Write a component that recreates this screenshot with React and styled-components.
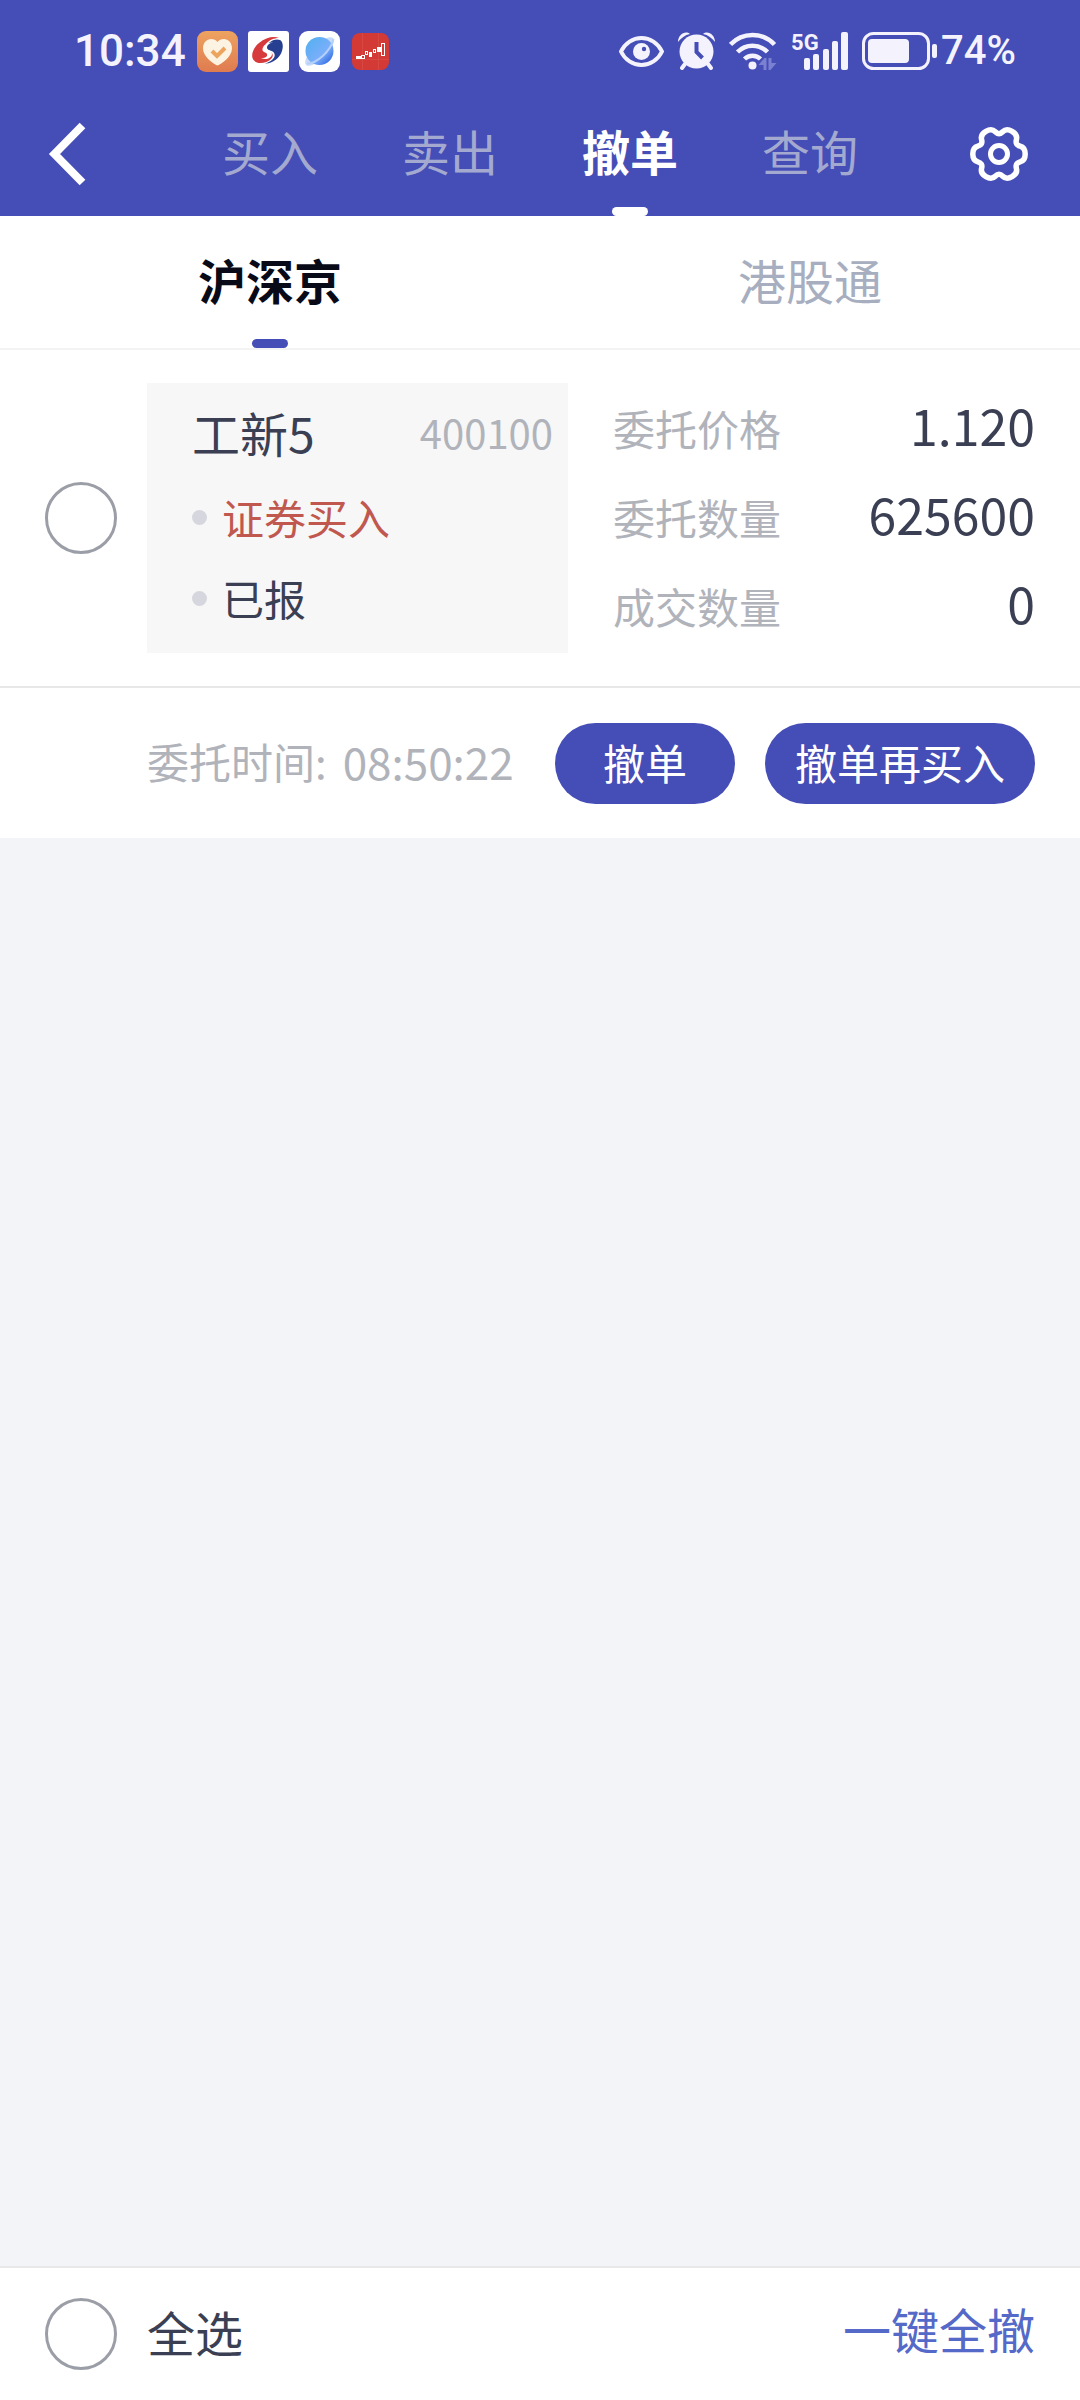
import React, { useState } from "react";
import styled, { createGlobalStyle, css } from "styled-components";

const color = {
  brand: "#454db6",
  status: "#f4f3fd",
  navMuted: "#a3a9cf",
  ink: "#3a3f53",
  inkStrong: "#080a18",
  muted: "#b1b3bb",
  tabMuted: "#a7aebf",
  buy: "#c0584f",
  link: "#5569c8",
  ring: "#9b9ea7",
  bullet: "#d6d7de",
  panel: "#f7f7f7",
  page: "#f3f4f7",
  line: "#e8e8e8",
};

const GlobalStyle = createGlobalStyle`
  *, *::before, *::after { box-sizing: border-box; }
  body {
    margin: 0;
    background: ${color.page};
    font-family: "Noto Sans CJK SC", sans-serif;
    color: ${color.ink};
  }
  button, input { font: inherit; color: inherit; margin: 0; }
  button { border: 0; padding: 0; background: none; cursor: pointer; }
`;

const Page = styled.div`
  display: flex;
  flex-direction: column;
  min-height: 100vh;
`;

const Header = styled.header`
  background: ${color.brand};
`;

const StatusBar = styled.div`
  display: flex;
  justify-content: space-between;
  align-items: center;
  height: 102px;
  padding: 0 64px 0 74px;
  color: ${color.status};
`;

const StatusGroup = styled.div`
  display: flex;
  align-items: center;
  gap: ${(p) => p.$gap}px;
`;

const StatusText = styled.span`
  font-family: Roboto, "Noto Sans CJK SC", sans-serif;
  font-size: ${(p) => p.$size}px;
  line-height: 48px;
  font-weight: 500;
`;

const Clock = styled(StatusText)`
  min-width: 113px;
`;

const BatteryGroup = styled.div`
  display: flex;
  align-items: center;
  gap: 4px;
`;

const Signal = styled.div`
  position: relative;
  display: flex;
`;

const NetworkTag = styled.span`
  position: absolute;
  top: 0;
  left: 0;
  font-family: Roboto, sans-serif;
  font-size: 22px;
  line-height: 22px;
  font-weight: 700;
`;

const Nav = styled.nav`
  display: grid;
  grid-template-columns: repeat(6, 1fr);
  height: 114px;
`;

const IconButton = styled.button`
  display: flex;
  align-items: center;
  justify-content: ${(p) => p.$side};
  padding: 0 52px 10px 48px;
`;

const tabBar = css`
  content: "";
  position: absolute;
  bottom: 0;
  left: 50%;
  width: 36px;
  height: 9px;
  margin-left: -18px;
  border-radius: 5px;
`;

const Tab = styled.button`
  position: relative;
  font-size: 48px;
  line-height: 60px;
  font-weight: ${(p) => (p.$active ? 700 : 400)};
`;

const NavTab = styled(Tab)`
  padding-bottom: 18px;
  color: ${(p) => (p.$active ? "#fff" : color.navMuted)};
  &::after {
    ${tabBar}
    background: ${(p) => (p.$active ? "#fff" : "transparent")};
  }
`;

const MarketTabs = styled.div`
  display: grid;
  grid-template-columns: 1fr 1fr;
  height: 134px;
  background: #fff;
  border-bottom: 2px solid #f3f3f4;
`;

const MarketTab = styled(Tab)`
  padding-bottom: 6px;
  color: ${(p) => (p.$active ? color.inkStrong : color.tabMuted)};
  &::after {
    ${tabBar}
    background: ${(p) => (p.$active ? color.brand : "transparent")};
  }
`;

const Orders = styled.main`
  flex: 1;
`;

const OrderCard = styled.article`
  background: #fff;
`;

const OrderBody = styled.div`
  display: grid;
  grid-template-columns: 102px minmax(0, 1fr) minmax(0, 1fr);
  align-items: center;
  padding: 33px 45px;
  border-bottom: 2px solid ${color.line};
`;

const Check = styled.input.attrs({ type: "checkbox" })`
  appearance: none;
  flex: none;
  width: 72px;
  height: 72px;
  border: 3px solid ${color.ring};
  border-radius: 50%;
  background: #fff;
  cursor: pointer;
  &:checked {
    border-color: ${color.brand};
    background: ${color.brand};
    box-shadow: inset 0 0 0 12px #fff;
  }
`;

const Stock = styled.section`
  align-self: stretch;
  display: flex;
  flex-direction: column;
  gap: 21px;
  margin-right: 23px;
  padding: 15px 15px 25px 45px;
  background: ${color.panel};
`;

const StockTitle = styled.div`
  display: flex;
  align-items: center;
  justify-content: space-between;
  line-height: 68px;
`;

const StockName = styled.h2`
  margin: 0;
  font-size: 48px;
  font-weight: 400;
`;

const StockCode = styled.span`
  font-size: 40px;
  color: ${color.muted};
`;

const StockTag = styled.div`
  display: flex;
  align-items: center;
  gap: 15px;
  font-size: 42px;
  line-height: 60px;
  color: ${(p) => (p.$buy ? color.buy : color.ink)};
  &::before {
    content: "";
    width: 15px;
    height: 15px;
    border-radius: 50%;
    background: ${color.bullet};
  }
`;

const Details = styled.dl`
  align-self: stretch;
  display: flex;
  flex-direction: column;
  gap: 29px;
  margin: 0;
  padding: 11px 0 0 22px;
`;

const Detail = styled.div`
  display: flex;
  align-items: baseline;
  justify-content: space-between;
`;

const DetailLabel = styled.dt`
  font-size: 42px;
  line-height: 48px;
  color: ${color.muted};
`;

const DetailValue = styled.dd`
  margin: 0;
  font-size: 50px;
  line-height: 60px;
`;

const OrderFooter = styled.footer`
  display: flex;
  align-items: center;
  justify-content: space-between;
  min-height: 150px;
  padding: 0 45px 0 147px;
`;

const OrderTime = styled.div`
  display: flex;
  align-items: center;
  gap: 16px;
  padding-bottom: 4px;
  font-size: 42px;
  line-height: 60px;
  color: ${color.muted};
`;

const TimeValue = styled.time`
  font-size: 44px;
`;

const Actions = styled.div`
  display: flex;
  gap: 30px;
`;

const Pill = styled.button`
  height: 81px;
  min-width: 180px;
  padding: 0 30px 3px;
  border-radius: 41px;
  background: ${color.brand};
  color: #fff;
  font-size: 42px;
  line-height: 60px;
`;

const BottomBar = styled.footer`
  display: flex;
  align-items: center;
  justify-content: space-between;
  height: 134px;
  padding: 0 45px;
  background: #fff;
  border-top: 2px solid ${color.line};
`;

const SelectAll = styled.label`
  display: flex;
  align-items: center;
  gap: 30px;
  font-size: 48px;
  line-height: 60px;
  cursor: pointer;
`;

const SelectAllText = styled.span`
  padding-bottom: 6px;
`;

const CancelAll = styled.button`
  padding-bottom: 12px;
  font-size: 48px;
  line-height: 60px;
  color: ${color.link};
`;

const HealthIcon = () => (
  <svg width="41" height="41" viewBox="0 0 41 41" aria-hidden="true">
    <defs>
      <linearGradient id="health" x1="0" y1="0" x2="0" y2="1">
        <stop offset="0" stopColor="#eea360" />
        <stop offset="1" stopColor="#df7b50" />
      </linearGradient>
    </defs>
    <rect width="41" height="41" rx="9" fill="url(#health)" />
    <path
      d="M20.500 34.500C17 33 6 26 6 17.500C6 11.500 10 8 14 8C17 8 19 9.300 20.500 11C22 9.300 24 8 27 8C31 8 35 11.500 35 17.500C35 26 24 33 20.500 34.500Z"
      fill="#fdf3e2"
    />
    <path d="M15 20l5 5 8-8" fill="none" stroke="#eda45f" strokeWidth="4" />
  </svg>
);

const BrokerIcon = () => (
  <svg width="41" height="41" viewBox="0 0 41 41" aria-hidden="true">
    <rect width="41" height="41" rx="3" fill="#fff" />
    <path
      d="M31 7C26 5 18 6 11 12C5 17 2 25 6 29.500C10 34 19 32 23 28C26 25 25 21 21 20.500C16 20 15 17 18 13C21 9 26 7 31 7Z"
      fill="#d63a3c"
    />
    <path
      d="M32 9C27 7 20 11 18 15.500C17 18 19 19 22 19.500C27 20.500 28 25 25 28C23 30 20 32 17 32.500C24 33 32 27 34 20C36 14 34 10 32 9Z"
      fill="#263f91"
    />
    <path
      d="M25 11.500C20 11 15 14 14.500 18C14 21.500 18 21 19 23C20 26 16 27.500 13 27C18 29.500 24 27 24 23C24 19 18.500 19.500 19 16C19.500 13.500 22 12 25 11.500Z"
      fill="#fff"
    />
  </svg>
);

const BrowserIcon = () => (
  <svg width="41" height="41" viewBox="0 0 41 41" aria-hidden="true">
    <defs>
      <linearGradient id="planet" x1="0" y1="0" x2="1" y2="1">
        <stop offset="0" stopColor="#4fb0f0" />
        <stop offset="0.600" stopColor="#7aaefa" />
        <stop offset="1" stopColor="#1f55dc" />
      </linearGradient>
    </defs>
    <rect width="41" height="41" rx="9" fill="#fff" />
    <ellipse cx="20.500" cy="20.500" rx="19" ry="7" fill="#c9dbfa" transform="rotate(-45 20.500 20.500)" />
    <circle cx="20.500" cy="20" r="14" fill="url(#planet)" />
    <path d="M8 32.500C17 33 32 20 34.500 8" fill="none" stroke="#b4d0fb" strokeWidth="2" />
  </svg>
);

const StocksIcon = () => (
  <svg width="41" height="41" viewBox="0 0 41 41" aria-hidden="true">
    <rect x="2" y="2" width="37" height="37" rx="8" fill="#d33a35" />
    <path d="M12.500 2v37M28.500 2v37M2 28.500h37" stroke="#d84842" strokeWidth="1" />
    <g fill="#fff">
      <rect x="6" y="25" width="5" height="3" />
      <rect x="19" y="21" width="3" height="5" />
      <rect x="27" y="16" width="4" height="5" />
    </g>
    <g fill="#d33a35" stroke="#fff" strokeWidth="1">
      <rect x="11.500" y="24.500" width="3" height="3" />
      <rect x="15.500" y="20.500" width="2" height="3" />
      <rect x="23.500" y="18.500" width="2" height="3" />
      <rect x="31.500" y="12.500" width="3" height="12" />
    </g>
  </svg>
);

const EyeIcon = () => (
  <svg width="45" height="31" viewBox="0 0 45 31" fill="none" aria-hidden="true">
    <path
      d="M2 15.500C6 7 14 2 22.500 2S39 7 43 15.500C39 24 31 29 22.500 29S6 24 2 15.500Z"
      stroke="currentColor"
      strokeWidth="4"
      strokeLinejoin="round"
    />
    <circle cx="22.500" cy="15.500" r="8.500" fill="currentColor" />
    <circle cx="25" cy="13" r="2.200" fill={color.brand} />
  </svg>
);

const AlarmIcon = () => (
  <svg width="37" height="38" viewBox="0 0 37 38" aria-hidden="true">
    <g fill="currentColor">
      <path d="M0 10C0 3 7-2 12 2C7 3 3 6 0 10Z" />
      <path d="M37 10C37 3 30-2 25 2C30 3 34 6 37 10Z" />
      <circle cx="18.500" cy="19.500" r="17" />
    </g>
    <path d="M7 32l-3 4M30 32l3 4" stroke="currentColor" strokeWidth="4" strokeLinecap="round" />
    <path d="M18.500 10v10l6 6" fill="none" stroke={color.brand} strokeWidth="4" />
  </svg>
);

const WifiIcon = () => (
  <svg width="48" height="38" viewBox="0 0 48 38" fill="none" aria-hidden="true">
    <g stroke="currentColor" strokeWidth="4.500">
      <path d="M1.500 12.500A30 30 0 0 1 45.500 12.500" />
      <path d="M8.500 20A21 21 0 0 1 38.500 20" />
      <path d="M15.500 27A11.500 11.500 0 0 1 31.500 27" />
    </g>
    <circle cx="23.500" cy="33.500" r="4" fill="currentColor" />
    <path d="M29.500 33l6-7h2v12h-3v-5zM39.500 26h3v5h5l-6 7h-2z" fill="#7b80d0" />
  </svg>
);

const BarsIcon = () => (
  <svg width="57" height="38" viewBox="0 0 57 38" fill="currentColor" aria-hidden="true">
    <rect x="13" y="26" width="6" height="12" rx="2" />
    <rect x="22" y="22" width="6" height="16" rx="2" />
    <rect x="32" y="17" width="6" height="21" rx="2" />
    <rect x="41" y="9" width="6" height="29" rx="2" />
    <rect x="50" y="0" width="7" height="38" rx="2" />
  </svg>
);

const BatteryIcon = () => (
  <svg width="75" height="38" viewBox="0 0 75 38" fill="none" aria-hidden="true">
    <rect x="1.500" y="1.500" width="65" height="35" rx="10" stroke="currentColor" strokeWidth="3" />
    <rect x="6" y="7" width="41" height="24" rx="4" fill="currentColor" />
    <rect x="70" y="12" width="5" height="14" rx="2" fill="currentColor" />
  </svg>
);

const BackIcon = () => (
  <svg width="38" height="64" viewBox="0 0 38 64" fill="none" aria-hidden="true">
    <path d="M34.500 3.500L6.500 32L34.500 60.500" stroke="#fff" strokeWidth="8" />
  </svg>
);

// Six flat teeth: two outer corners and one inner valley each, rounded by
// running a quadratic curve through the midpoints of the control polygon.
const gearPath = (() => {
  const polar = (r, deg) => {
    const a = (deg * Math.PI) / 180;
    return [29 + r * Math.cos(a), 29 + r * Math.sin(a)];
  };
  const points = [0, 60, 120, 180, 240, 300].flatMap((a) => [
    polar(27, a - 14),
    polar(27, a + 14),
    polar(18.5, a + 30),
  ]);
  const mid = (i) => {
    const [x1, y1] = points[i % points.length];
    const [x2, y2] = points[(i + 1) % points.length];
    return `${((x1 + x2) / 2).toFixed(2)} ${((y1 + y2) / 2).toFixed(2)}`;
  };
  const curves = points.map((_, i) => {
    const [x, y] = points[(i + 1) % points.length];
    return `Q${x.toFixed(2)} ${y.toFixed(2)} ${mid(i + 1)}`;
  });
  return `M${mid(0)}${curves.join("")}Z`;
})();

const GearIcon = () => (
  <svg width="58" height="58" viewBox="0 0 58 58" fill="none" stroke="#fff" aria-hidden="true">
    <path d={gearPath} strokeWidth="5.500" strokeLinejoin="round" />
    <circle cx="29" cy="29" r="8.500" strokeWidth="5" />
  </svg>
);

const NAV = ["买入", "卖出", "撤单", "查询"];
const MARKETS = ["沪深京", "港股通"];
const ORDER = {
  name: "工新5",
  code: "400100",
  side: "证券买入",
  state: "已报",
  time: "08:50:22",
  details: [
    ["委托价格", "1.120"],
    ["委托数量", "625600"],
    ["成交数量", "0"],
  ],
};

export default function App() {
  const [nav, setNav] = useState("撤单");
  const [market, setMarket] = useState("沪深京");
  const [checked, setChecked] = useState(false);
  const toggle = (e) => setChecked(e.target.checked);

  return (
    <Page>
      <GlobalStyle />
      <Header>
        <StatusBar>
          <StatusGroup $gap={10}>
            <Clock $size={44}>10:34</Clock>
            <HealthIcon />
            <BrokerIcon />
            <BrowserIcon />
            <StocksIcon />
          </StatusGroup>
          <StatusGroup $gap={14}>
            <EyeIcon />
            <AlarmIcon />
            <WifiIcon />
            <Signal>
              <NetworkTag>5G</NetworkTag>
              <BarsIcon />
            </Signal>
            <BatteryGroup>
              <BatteryIcon />
              <StatusText $size={40}>74%</StatusText>
            </BatteryGroup>
          </StatusGroup>
        </StatusBar>
        <Nav>
          <IconButton $side="flex-start" aria-label="返回">
            <BackIcon />
          </IconButton>
          {NAV.map((item) => (
            <NavTab key={item} $active={item === nav} onClick={() => setNav(item)}>
              {item}
            </NavTab>
          ))}
          <IconButton $side="flex-end" aria-label="设置">
            <GearIcon />
          </IconButton>
        </Nav>
      </Header>

      <MarketTabs>
        {MARKETS.map((item) => (
          <MarketTab key={item} $active={item === market} onClick={() => setMarket(item)}>
            {item}
          </MarketTab>
        ))}
      </MarketTabs>

      <Orders>
        <OrderCard>
          <OrderBody>
            <Check aria-label={ORDER.name} checked={checked} onChange={toggle} />
            <Stock>
              <StockTitle>
                <StockName>{ORDER.name}</StockName>
                <StockCode>{ORDER.code}</StockCode>
              </StockTitle>
              <StockTag $buy>{ORDER.side}</StockTag>
              <StockTag>{ORDER.state}</StockTag>
            </Stock>
            <Details>
              {ORDER.details.map(([label, value]) => (
                <Detail key={label}>
                  <DetailLabel>{label}</DetailLabel>
                  <DetailValue>{value}</DetailValue>
                </Detail>
              ))}
            </Details>
          </OrderBody>
          <OrderFooter>
            <OrderTime>
              <span>委托时间:</span>
              <TimeValue>{ORDER.time}</TimeValue>
            </OrderTime>
            <Actions>
              <Pill>撤单</Pill>
              <Pill>撤单再买入</Pill>
            </Actions>
          </OrderFooter>
        </OrderCard>
      </Orders>

      <BottomBar>
        <SelectAll>
          <Check checked={checked} onChange={toggle} />
          <SelectAllText>全选</SelectAllText>
        </SelectAll>
        <CancelAll>一键全撤</CancelAll>
      </BottomBar>
    </Page>
  );
}
